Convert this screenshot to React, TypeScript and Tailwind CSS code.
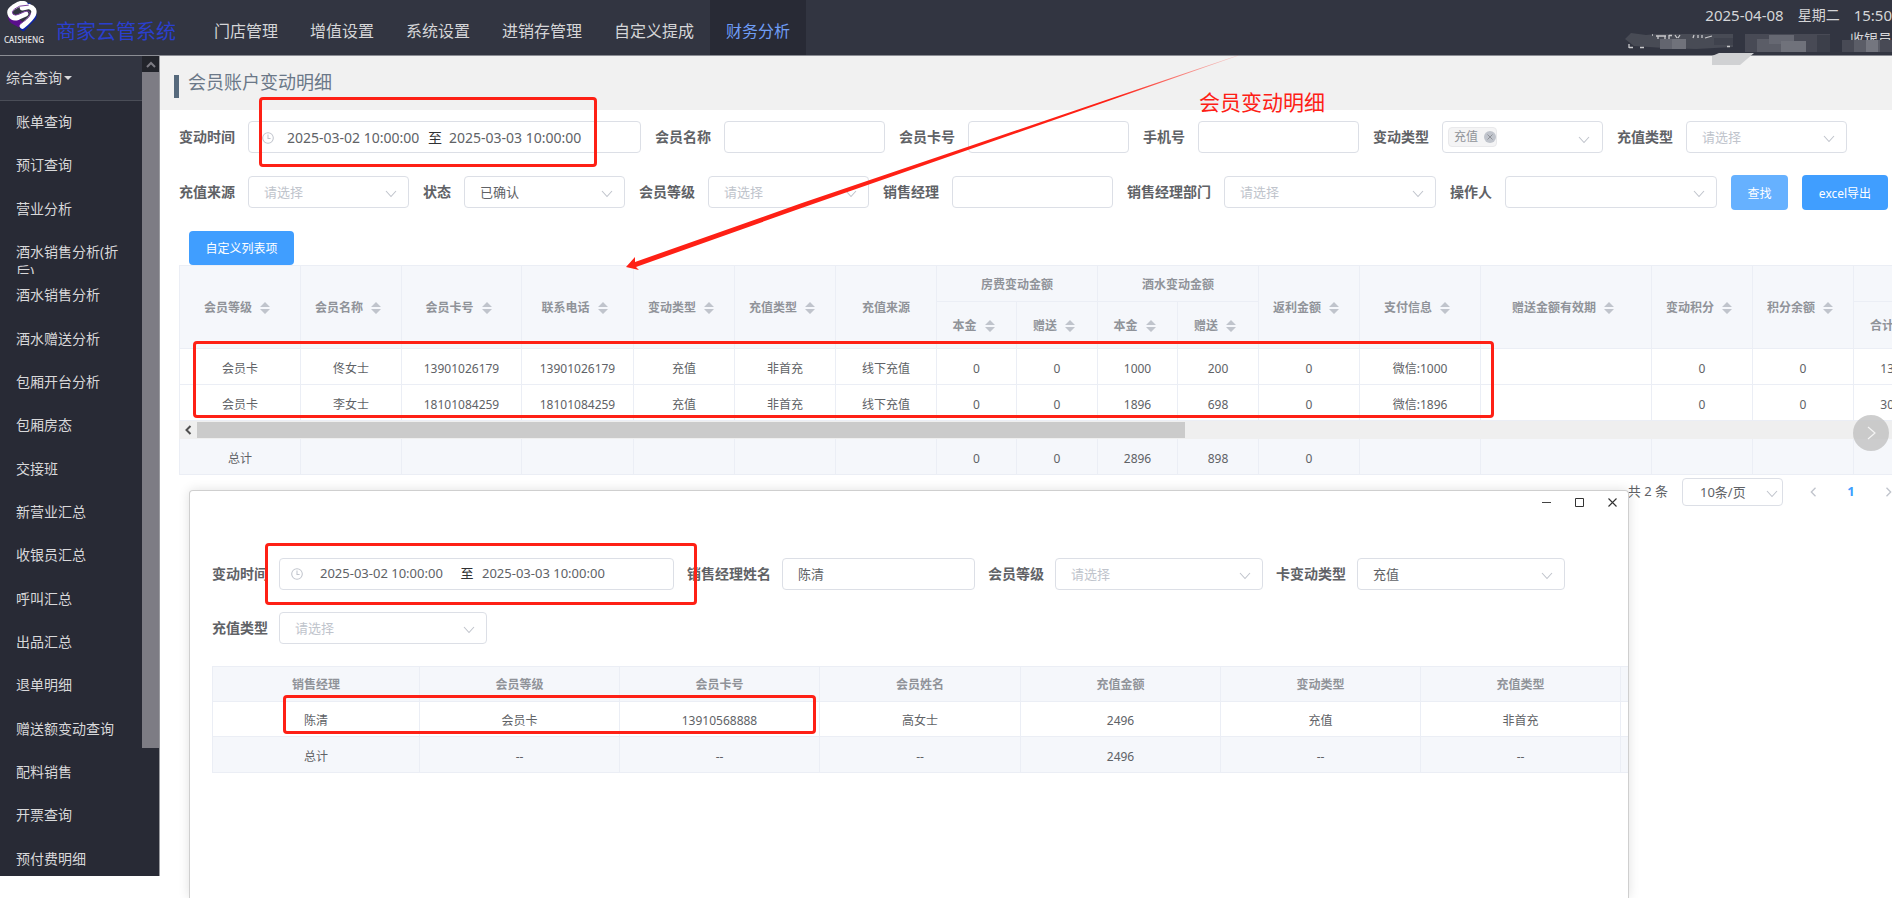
import type { ReactNode } from 'react';

const NAV = ['门店管理', '增值设置', '系统设置', '进销存管理', '自定义提成', '财务分析'];

const MENU = [
  '账单查询',
  '预订查询',
  '营业分析',
  '酒水销售分析(折后)',
  '酒水销售分析',
  '酒水赠送分析',
  '包厢开台分析',
  '包厢房态',
  '交接班',
  '新营业汇总',
  '收银员汇总',
  '呼叫汇总',
  '出品汇总',
  '退单明细',
  '赠送额变动查询',
  '配料销售',
  '开票查询',
  '预付费明细',
];

const COLUMN_WIDTHS = [121, 101, 120, 112, 101, 101, 101, 80, 81, 80, 81, 101, 121, 171, 101, 101, 81];

const ROWS = [
  ['会员卡', '佟女士', '13901026179', '13901026179', '充值', '非首充', '线下充值', '0', '0', '1000', '200', '0', '微信:1000', '', '0', '0', '1300'],
  ['会员卡', '李女士', '18101084259', '18101084259', '充值', '非首充', '线下充值', '0', '0', '1896', '698', '0', '微信:1896', '', '0', '0', '3094'],
];

const TOTALS = ['总计', '', '', '', '', '', '', '0', '0', '2896', '898', '0', '', '', '', '', ''];

const SUB_WIDTHS = [207, 200, 200, 201, 200, 200, 200, 200];
const SUB_HEAD = ['销售经理', '会员等级', '会员卡号', '会员姓名', '充值金额', '变动类型', '充值类型', ''];
const SUB_ROW = ['陈清', '会员卡', '13910568888', '高女士', '2496', '充值', '非首充', ''];
const SUB_TOTAL = ['总计', '--', '--', '--', '2496', '--', '--', ''];

function Logo() {
  return (
    <svg viewBox="0 0 90 92" className="h-[31px] w-[30px]" aria-hidden="true">
      <path d="M4 44 Q2 60 14 67 L36 79 L52 68 L32 50 Z" fill="#5a0f8c" />
      <path d="M86 32 Q92 48 84 56 L50 91 L38 84 L42 70 Z" fill="#0d23a8" />
      <path d="M50 1 L72 8 L60 18 Z" fill="#0d23a8" />
      <path
        d="M54 9 Q46 5 36 9 L20 18 Q4 28 11 42 Q18 54 34 48 L56 38 M46 20 L66 16 Q86 22 79 40 Q72 54 46 75"
        fill="none"
        stroke="#ffffff"
        strokeWidth="16"
        strokeLinecap="round"
        strokeLinejoin="round"
      />
      <path
        d="M64 12 L38 15 L22 24 Q12 32 18 39 Q24 45 36 39 L54 31 Q68 27 70 38 Q69 46 58 55 L40 68"
        fill="none"
        stroke="#7a3fa0"
        strokeWidth="3"
        strokeLinecap="round"
      />
    </svg>
  );
}

function Chevron({ className = '' }: { className?: string }) {
  return (
    <svg viewBox="0 0 12 8" className={`pointer-events-none h-2 w-3 ${className}`} aria-hidden="true">
      <path d="M1 1 L6 6.5 L11 1" fill="none" stroke="#c0c4cc" strokeWidth="1.1" />
    </svg>
  );
}

function Clock() {
  return (
    <svg viewBox="0 0 14 14" className="h-3 w-3 shrink-0" aria-hidden="true">
      <circle cx="7" cy="7" r="6.2" fill="none" stroke="#c0c4cc" strokeWidth="1.2" />
      <path d="M7 3 V7.5 H10" fill="none" stroke="#c0c4cc" strokeWidth="1.2" />
    </svg>
  );
}

function Sort() {
  return (
    <svg viewBox="0 0 24 12" className="h-3 w-6 shrink-0" aria-hidden="true">
      <path d="M13 0 L18 5 H8 Z M13 12 L18 7 H8 Z" fill="#c0c4cc" />
    </svg>
  );
}

function Field({ id, label, gap = 'gap-[13px]', children }: { id: string; label: string; gap?: string; children: ReactNode }) {
  return (
    <div className={`flex shrink-0 items-center ${gap}`}>
      <label htmlFor={id} className="pt-px text-sm leading-8 font-bold whitespace-nowrap text-[#606266]">
        {label}
      </label>
      {children}
    </div>
  );
}

const BOX = 'h-8 rounded border border-[#dcdfe6] bg-white';

function TextBox({ id, width, value = '' }: { id: string; width: string; value?: string }) {
  return <input id={id} defaultValue={value} className={`${BOX} ${width} px-[15px] text-[13px] text-[#606266] outline-none`} />;
}

function Select({ id, width, value, chosen = false }: { id: string; width: string; value: string; chosen?: boolean }) {
  return (
    <div className={`relative ${width}`}>
      <select
        id={id}
        className={`${BOX} w-full appearance-none px-[15px] pt-0.5 text-[13px] outline-none ${chosen ? 'text-[#606266]' : 'text-[#c0c4cc]'}`}
      >
        <option>{value}</option>
      </select>
      <Chevron className="absolute top-3.5 right-3" />
    </div>
  );
}

function Columns({ widths }: { widths: number[] }) {
  return (
    <colgroup>
      {widths.map((w, i) => (
        <col key={i} style={{ width: w }} />
      ))}
    </colgroup>
  );
}

const CELL = 'border-r border-b border-[#ebeef5] text-center whitespace-nowrap';

function Th({ text, sort = true, rowSpan, colSpan }: { text: string; sort?: boolean; rowSpan?: number; colSpan?: number }) {
  return (
    <th rowSpan={rowSpan} colSpan={colSpan} className={`${CELL} px-0 pt-0.5 pb-0 font-bold`}>
      <span className="inline-flex items-center">
        {text}
        {sort && <Sort />}
      </span>
    </th>
  );
}

function Td({ text }: { text: string }) {
  return <td className={`${CELL} px-0 pt-1 pb-0`}>{text}</td>;
}

function AccountTable() {
  return (
    <div className="relative ml-[19px] text-xs text-[#606266]">
      <div className="overflow-hidden">
        <table className="w-[1755px] table-fixed border-separate border-spacing-0 border-t border-l border-[#ebeef5]">
          <Columns widths={COLUMN_WIDTHS} />
          <thead className="bg-[#f5f7fb] text-[#909399]">
            <tr className="h-9">
              <Th text="会员等级" rowSpan={2} />
              <Th text="会员名称" rowSpan={2} />
              <Th text="会员卡号" rowSpan={2} />
              <Th text="联系电话" rowSpan={2} />
              <Th text="变动类型" rowSpan={2} />
              <Th text="充值类型" rowSpan={2} />
              <Th text="充值来源" sort={false} rowSpan={2} />
              <Th text="房费变动金额" sort={false} colSpan={2} />
              <Th text="酒水变动金额" sort={false} colSpan={2} />
              <Th text="返利金额" rowSpan={2} />
              <Th text="支付信息" rowSpan={2} />
              <Th text="赠送金额有效期" rowSpan={2} />
              <Th text="变动积分" rowSpan={2} />
              <Th text="积分余额" rowSpan={2} />
              <Th text="" sort={false} />
            </tr>
            <tr className="h-[47px]">
              <Th text="本金" />
              <Th text="赠送" />
              <Th text="本金" />
              <Th text="赠送" />
              <Th text="合计" />
            </tr>
          </thead>
          <tbody>
            {ROWS.map((row) => (
              <tr key={row[2]} className="h-9">
                {row.map((c, i) => (
                  <Td key={i} text={c} />
                ))}
              </tr>
            ))}
          </tbody>
        </table>
        <div className="flex h-[18px] items-center bg-[#efefef]">
          <button type="button" aria-label="向左滚动" className="flex h-full w-[18px] items-center justify-center">
            <svg viewBox="0 0 8 10" className="h-2.5 w-2" aria-hidden="true">
              <path d="M6.5 1 L2.5 5 L6.5 9" fill="none" stroke="#505050" strokeWidth="2" />
            </svg>
          </button>
          <div className="h-4 w-[988px] bg-[#cbcbcb]" />
        </div>
        <table className="w-[1755px] table-fixed border-separate border-spacing-0 border-l border-[#ebeef5] bg-[#f5f7fb]">
          <Columns widths={COLUMN_WIDTHS} />
          <tbody>
            <tr className="h-9">
              {TOTALS.map((c, i) => (
                <Td key={i} text={c} />
              ))}
            </tr>
          </tbody>
        </table>
      </div>
      <button
        type="button"
        aria-label="下一屏"
        className="absolute right-[3px] bottom-6 flex h-9 w-9 items-center justify-center rounded-full bg-[#bebebe]/75"
      >
        <svg viewBox="0 0 10 16" className="h-4 w-2.5" aria-hidden="true">
          <path d="M2 2 L9 8 L2 14" fill="none" stroke="#f4f4f4" strokeWidth="1.2" />
        </svg>
      </button>
      <div className="absolute top-[76px] left-[14px] h-[77px] w-[1301px] rounded border-3 border-[#fe2015]" />
    </div>
  );
}

function Redaction() {
  return (
    <svg viewBox="0 0 270 36" className="absolute top-8 right-0 h-9 w-[270px]" aria-hidden="true">
      <path d="M3 7 L9 1 L24 3 L34 2 L111 2 V15 L74 17 L42 16 L12 14 Z" fill="#484b55" />
      <path
        d="M7 12 V16 M7 15.500 H11 M18 15.500 H22 M30 3 H31 M34 4 H44 M36 4 V7 M43 4 V7 M47 3 V7 M47 3.500 H50 M53 3 L55 6 M58 3 L56 6 M72 3 L71 6 M76 3 V6 M80 3 V6 M83 6 L90 4 M105 14.500 H108"
        stroke="#c9c9cc"
        strokeWidth="1.3"
      />
      <path d="M38 7 H64 V17 H38 Z" fill="#63656f" />
      <path d="M50 7 H64 V17 H50 Z" fill="#70727b" />
      <path d="M92 6 H111 V13 H92 Z" fill="#3f424d" />
      <path d="M123 2 H208 V20 H123 Z" fill="#484a55" />
      <path d="M135 7 H159 V20 H135 Z" fill="#5b5d67" />
      <path d="M147 3 H172 V12 H147 Z" fill="#666872" />
      <path d="M159 9 H184 V20 H159 Z" fill="#70727b" />
      <path d="M195 3 H208 V20 H195 Z" fill="#3c3f4a" />
      <path d="M220 8 H270 V20 H220 Z" fill="#484a55" />
      <path d="M232 8 H258 V20 H232 Z" fill="#5b5d67" />
      <path d="M244 8 H256 V20 H244 Z" fill="#74767f" />
      <path d="M90 24 L97 21 H132 L118 33 H90 Z" fill="#d0d1d3" />
    </svg>
  );
}

function TopBar() {
  return (
    <header className="relative flex h-14 border-b border-[#8b8d94] bg-[#323541]">
      <div className="flex w-[198px] shrink-0">
        <div className="flex w-[54px] shrink-0 flex-col pt-px pl-[7px]">
          <Logo />
          <span className="-ml-[3px] text-[8px] leading-4 font-medium text-[#e4e4e6]">CAISHENG</span>
        </div>
        <span className="pt-4 pl-0.5 text-xl leading-8 whitespace-nowrap text-[#2a3fce]">商家云管系统</span>
      </div>
      <nav className="flex">
        {NAV.map((n, i) => (
          <a
            key={n}
            href="#"
            className={`px-4 pt-[7px] text-base leading-12 whitespace-nowrap ${i === 5 ? 'bg-[#282a35] text-[#6f9df5]' : 'text-[#d5d5d8]'}`}
          >
            {n}
          </a>
        ))}
      </nav>
      <div className="ml-auto text-[#d5d5d8]">
        <div className="flex gap-3.5 pt-[5px] leading-5 whitespace-nowrap">
          <span className="text-[15px]">2025-04-08</span>
          <span className="text-sm leading-5">星期二</span>
          <span className="text-[15px]">15:50</span>
        </div>
        <div className="pt-1 text-right text-sm leading-5">收银员</div>
      </div>
      <Redaction />
    </header>
  );
}

function Sidebar() {
  return (
    <aside className="flex h-[820px] w-40 shrink-0 border-r border-[#9a9ba0] bg-[#282a35] text-sm text-[#d8d8da]">
      <div className="w-[142px] overflow-hidden">
        <button type="button" className="flex h-[45px] w-full items-center gap-0.5 border-b border-[#4a4d57] bg-[#323541] pl-1.5">
          综合查询
          <svg viewBox="0 0 8 4" className="h-1 w-2" aria-hidden="true">
            <path d="M0 0 H8 L4 4 Z" fill="#d8d8da" />
          </svg>
        </button>
        <ul className="flex h-[780px] flex-col">
          {MENU.map((m) => (
            <li key={m} className="min-h-0 flex-1 overflow-hidden pt-[11px] pr-4 pl-4 leading-5">
              <a href="#">{m}</a>
            </li>
          ))}
        </ul>
      </div>
      <div className="flex w-[17px] flex-col">
        <div className="flex h-4 items-center justify-center bg-[#22242b]">
          <svg viewBox="0 0 10 7" className="h-[7px] w-2.5" aria-hidden="true">
            <path d="M1 6 L5 2 L9 6" fill="none" stroke="#7c7b83" strokeWidth="2" />
          </svg>
        </div>
        <div className="h-[676px] bg-[#7d7c84]" />
      </div>
    </aside>
  );
}

function Filters() {
  return (
    <div className="flex flex-col gap-[22px] pt-2.5 pl-[19px]">
      <div className="flex gap-3.5">
        <Field id="from" label="变动时间">
          <div className={`${BOX} flex w-[393px] items-center pt-0.5 pl-[13px] text-sm text-[#606266]`}>
            <Clock />
            <input id="from" defaultValue="2025-03-02 10:00:00" className="ml-[13px] w-[134px] outline-none" />
            <span className="w-7 text-center text-[#303133]">至</span>
            <input aria-label="结束时间" defaultValue="2025-03-03 10:00:00" className="w-[135px] outline-none" />
          </div>
        </Field>
        <Field id="name" label="会员名称">
          <TextBox id="name" width="w-[161px]" />
        </Field>
        <Field id="card" label="会员卡号">
          <TextBox id="card" width="w-[161px]" />
        </Field>
        <Field id="phone" label="手机号">
          <TextBox id="phone" width="w-[161px]" />
        </Field>
        <Field id="change" label="变动类型">
          <div className={`${BOX} flex w-[161px] items-center pr-3 pl-[5px]`}>
            <span className="flex h-5 shrink-0 items-center gap-1.5 rounded-sm border border-[#e9e9eb] bg-[#f4f4f5] pl-[5px] text-xs text-[#909399]">
              充值
              <button type="button" aria-label="移除充值" className="flex h-3 w-3 items-center justify-center rounded-full bg-[#c0c4cc]">
                <svg viewBox="0 0 8 8" className="h-2 w-2" aria-hidden="true">
                  <path d="M1.5 1.5 L6.5 6.5 M6.5 1.5 L1.5 6.5" stroke="#909399" strokeWidth="1" />
                </svg>
              </button>
            </span>
            <input id="change" className="min-w-0 flex-1 outline-none" />
            <Chevron className="mt-1.5" />
          </div>
        </Field>
        <Field id="recharge" label="充值类型">
          <Select id="recharge" width="w-[161px]" value="请选择" />
        </Field>
      </div>
      <div className="flex items-start gap-3.5">
        <Field id="source" label="充值来源">
          <Select id="source" width="w-[161px]" value="请选择" />
        </Field>
        <Field id="status" label="状态">
          <Select id="status" width="w-[161px]" value="已确认" chosen />
        </Field>
        <Field id="level" label="会员等级">
          <Select id="level" width="w-[161px]" value="请选择" />
        </Field>
        <Field id="manager" label="销售经理">
          <TextBox id="manager" width="w-[161px]" />
        </Field>
        <Field id="dept" label="销售经理部门">
          <Select id="dept" width="w-[212px]" value="请选择" />
        </Field>
        <Field id="operator" label="操作人">
          <Select id="operator" width="w-[212px]" value="" />
        </Field>
        <button type="button" className="h-[35px] w-[57px] shrink-0 rounded-sm bg-[#66b1ff] pt-0.5 text-xs text-white">
          查找
        </button>
        <button type="button" className="h-[35px] w-[86px] shrink-0 rounded-sm bg-[#409eff] pt-0.5 text-xs text-white">
          excel导出
        </button>
      </div>
    </div>
  );
}

function Pagination() {
  return (
    <div className="-mr-4 flex items-center justify-end pt-[3px] text-[13px] text-[#606266]">
      <span className="mr-3.5 whitespace-nowrap">共 2 条</span>
      <div className="relative mr-[11px]">
        <select aria-label="每页条数" className="h-7 w-[101px] appearance-none rounded-sm border border-[#dcdfe6] bg-white pt-0.5 pl-[17px] outline-none">
          <option>10条/页</option>
        </select>
        <Chevron className="absolute top-3 right-[5px]" />
      </div>
      <button type="button" aria-label="上一页" className="flex w-[38px] justify-center">
        <svg viewBox="0 0 8 12" className="h-2.5 w-2" aria-hidden="true">
          <path d="M7 1 L2 6 L7 11" fill="none" stroke="#c0c4cc" strokeWidth="1.6" />
        </svg>
      </button>
      <button type="button" className="w-[38px] font-bold text-[#409eff]">
        1
      </button>
      <button type="button" aria-label="下一页" className="flex w-[38px] justify-center">
        <svg viewBox="0 0 8 12" className="h-2.5 w-2" aria-hidden="true">
          <path d="M1 1 L6 6 L1 11" fill="none" stroke="#c0c4cc" strokeWidth="1.6" />
        </svg>
      </button>
    </div>
  );
}

function DetailWindow() {
  return (
    <section className="absolute top-[490px] bottom-0 left-[189px] w-[1440px] overflow-hidden rounded-t-sm border border-b-0 border-[#cfcfcf] bg-white shadow-[0_0_12px_rgba(0,0,0,0.12)]">
      <div className="flex h-[23px] items-center justify-end gap-6 pr-[11px]">
        <button type="button" aria-label="最小化">
          <svg viewBox="0 0 9 9" className="h-[9px] w-[9px]" aria-hidden="true">
            <path d="M0 4.5 H9" stroke="#444" strokeWidth="1" />
          </svg>
        </button>
        <button type="button" aria-label="最大化">
          <svg viewBox="0 0 9 9" className="h-[9px] w-[9px]" aria-hidden="true">
            <path d="M0.5 0.5 H8.5 V8.5 H0.5 Z" fill="none" stroke="#333" strokeWidth="1" />
          </svg>
        </button>
        <button type="button" aria-label="关闭">
          <svg viewBox="0 0 9 9" className="h-[9px] w-[9px]" aria-hidden="true">
            <path d="M0.5 0.5 L8.5 8.5 M8.5 0.5 L0.5 8.5" stroke="#333" strokeWidth="1.1" />
          </svg>
        </button>
      </div>
      <div className="pt-[43px] pl-[22px]">
        <div className="flex gap-[13px]">
          <Field id="w-from" label="变动时间" gap="gap-[11px]">
            <div className={`${BOX} flex w-[395px] items-center pt-px pl-[11px] text-[13px] text-[#606266]`}>
              <Clock />
              <input id="w-from" defaultValue="2025-03-02 10:00:00" className="ml-[17px] w-[132px] outline-none" />
              <span className="w-[30px] text-center text-[#303133]">至</span>
              <input aria-label="结束时间" defaultValue="2025-03-03 10:00:00" className="w-[132px] outline-none" />
            </div>
          </Field>
          <Field id="w-manager" label="销售经理姓名" gap="gap-[11px]">
            <TextBox id="w-manager" width="w-[193px]" value="陈清" />
          </Field>
          <Field id="w-level" label="会员等级" gap="gap-[11px]">
            <Select id="w-level" width="w-[208px]" value="请选择" />
          </Field>
          <Field id="w-change" label="卡变动类型" gap="gap-[11px]">
            <Select id="w-change" width="w-[208px]" value="充值" chosen />
          </Field>
        </div>
        <div className="flex pt-[21px]">
          <Field id="w-recharge" label="充值类型" gap="gap-[11px]">
            <Select id="w-recharge" width="w-[208px]" value="请选择" />
          </Field>
        </div>
        <table className="mt-[22px] w-[1609px] table-fixed border-separate border-spacing-0 border-t border-l border-[#ebeef5] text-xs text-[#606266]">
          <Columns widths={SUB_WIDTHS} />
          <thead className="bg-[#f5f7fb] text-[#909399]">
            <tr className="h-[35px]">
              {SUB_HEAD.map((c, i) => (
                <Th key={i} text={c} sort={false} />
              ))}
            </tr>
          </thead>
          <tbody>
            <tr className="h-[35px]">
              {SUB_ROW.map((c, i) => (
                <Td key={i} text={c} />
              ))}
            </tr>
            <tr className="h-9 bg-[#f5f7fb]">
              {SUB_TOTAL.map((c, i) => (
                <Td key={i} text={c} />
              ))}
            </tr>
          </tbody>
        </table>
      </div>
      <div className="absolute top-[52px] left-[75px] h-[62px] w-[432px] rounded border-3 border-[#fe2015]" />
      <div className="absolute top-[204px] left-[93px] h-[39px] w-[533px] rounded border-3 border-[#fe2015]" />
    </section>
  );
}

function Arrow() {
  return (
    <svg viewBox="0 0 620 220" className="pointer-events-none absolute top-[54px] left-[622px] h-[220px] w-[620px]" aria-hidden="true">
      <defs>
        <linearGradient id="fade" x1="0" x2="1" y1="0" y2="0">
          <stop offset="0" stopColor="#fe2015" />
          <stop offset="0.8" stopColor="#fe2015" />
          <stop offset="1" stopColor="#fe2015" stopOpacity="0.15" />
        </linearGradient>
      </defs>
      <path d="M4 213 L13 203 L13 208 L180 149 L616 1.2 L616 1.8 L181 153.500 L14 213 L17 216 Z" fill="url(#fade)" />
    </svg>
  );
}

export default function App() {
  return (
    <div className="relative min-h-screen overflow-hidden bg-white font-['Noto_Sans','Noto_Sans_CJK_SC',sans-serif]">
      <TopBar />
      <div className="flex">
        <Sidebar />
        <main className="min-w-0 flex-1 overflow-hidden">
          <div className="flex h-[54px] items-start gap-[9px] bg-[#f1f1f1] pl-3.5">
            <span className="mt-[19px] h-[23px] w-[5px] bg-[#56697c]" />
            <h1 className="pt-3 text-lg leading-7 text-[#6b7888]">会员账户变动明细</h1>
          </div>
          <Filters />
          <button type="button" className="mt-[21px] ml-[29px] block h-[34px] w-[105px] rounded-sm bg-[#409eff] pt-0.5 text-xs text-white">
            自定义列表项
          </button>
          <AccountTable />
          <Pagination />
        </main>
      </div>
      <DetailWindow />
      <div className="pointer-events-none absolute top-[97px] left-[259px] h-[70px] w-[338px] rounded border-3 border-[#fe2015]" />
      <Arrow />
      <p className="absolute top-[87px] left-[1199px] text-[21px] leading-[30px] whitespace-nowrap text-[#fe2015]">会员变动明细</p>
    </div>
  );
}
